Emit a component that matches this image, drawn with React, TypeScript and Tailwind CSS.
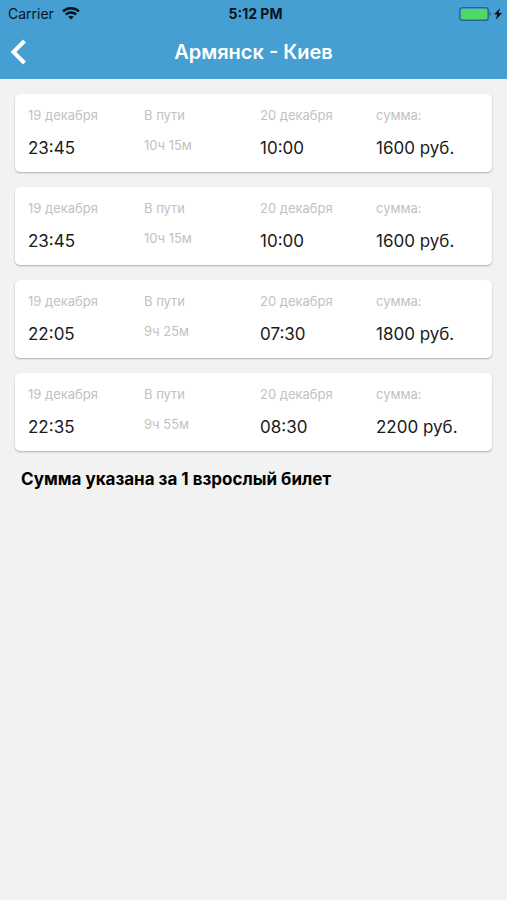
import React from 'react';

interface Trip {
  id: number;
  departDate: string;
  departTime: string;
  duration: string;
  arriveDate: string;
  arriveTime: string;
  price: string;
}

const TRIPS: Trip[] = [
  { id: 1, departDate: '19 декабря', departTime: '23:45', duration: '10ч 15м', arriveDate: '20 декабря', arriveTime: '10:00', price: '1600 руб.' },
  { id: 2, departDate: '19 декабря', departTime: '23:45', duration: '10ч 15м', arriveDate: '20 декабря', arriveTime: '10:00', price: '1600 руб.' },
  { id: 3, departDate: '19 декабря', departTime: '22:05', duration: '9ч 25м', arriveDate: '20 декабря', arriveTime: '07:30', price: '1800 руб.' },
  { id: 4, departDate: '19 декабря', departTime: '22:35', duration: '9ч 55м', arriveDate: '20 декабря', arriveTime: '08:30', price: '2200 руб.' },
];

const WifiIcon: React.FC = () => (
  <svg width="18" height="13" viewBox="0 0 18 13" fill="none" stroke="#06141d" strokeWidth="2.4" aria-hidden="true">
    <path d="M1 4.4C5.6 0.2 12.4 0.2 17 4.4" />
    <path d="M3.8 7.5C6.8 4.8 11.2 4.8 14.2 7.5" />
    <path d="M9 12.6L6.2 9.8C7.8 8.4 10.2 8.4 11.8 9.8Z" fill="#06141d" stroke="none" />
  </svg>
);

const BatteryIcon: React.FC = () => (
  <svg width="44" height="14" viewBox="0 0 44 14" aria-hidden="true">
    <rect x="0.7" y="0.7" width="28.6" height="12.6" rx="2.6" fill="none" stroke="#28658b" strokeWidth="1.2" />
    <rect x="2" y="2" width="26" height="10" rx="1.2" fill="#4cd964" />
    <path d="M30.6 4.8C32.2 5.4 32.2 8.6 30.6 9.2Z" fill="#28658b" />
    <path d="M41 1.2L35 7.6H38.2L36.8 12.8L43 6H39.6Z" fill="#06141d" />
  </svg>
);

const StatusBar: React.FC = () => (
  <div className="grid grid-cols-3 items-center h-[27px] pl-2 pr-1 text-sm text-[#06141d]">
    <div className="flex items-center gap-2">
      <span>Carrier</span>
      <WifiIcon />
    </div>
    <span className="text-center font-bold">5:12 PM</span>
    <div className="flex justify-end">
      <BatteryIcon />
    </div>
  </div>
);

const Header: React.FC = () => (
  <header className="bg-[#459fd3]">
    <StatusBar />
    <div className="grid grid-cols-[48px_1fr_48px] items-center h-[52px] pb-[2px]">
      <button type="button" aria-label="Назад" className="flex items-center h-full pl-[10px]">
        <svg width="18" height="26" viewBox="0 0 18 26" fill="none" stroke="#fff" strokeWidth="4" aria-hidden="true">
          <path d="M14.5 2L3.4 13L14.5 24" strokeLinejoin="miter" strokeLinecap="butt" />
        </svg>
      </button>
      <h1 className="text-center text-xl font-semibold text-white">Армянск - Киев</h1>
    </div>
  </header>
);

const TripCard: React.FC<{ trip: Trip }> = ({ trip }) => (
  <li className="grid grid-cols-4 pl-[13px] pt-[11px] pb-[14px] bg-white rounded-[5px] shadow-[0_1px_2px_rgba(0,0,0,0.28)]">
    <div>
      <p className="text-[13px] leading-5 text-[#c2c2c2]">{trip.departDate}</p>
      <p className="mt-[13px] text-[17px] leading-5 text-[#1a1a1a]">{trip.departTime}</p>
    </div>
    <div>
      <p className="text-[13px] leading-5 text-[#c2c2c2]">В пути</p>
      <p className="mt-[10px] text-[13px] leading-5 text-[#c2c2c2]">{trip.duration}</p>
    </div>
    <div>
      <p className="text-[13px] leading-5 text-[#c2c2c2]">{trip.arriveDate}</p>
      <p className="mt-[13px] text-[17px] leading-5 text-[#1a1a1a]">{trip.arriveTime}</p>
    </div>
    <div>
      <p className="text-[13px] leading-5 text-[#c2c2c2]">сумма:</p>
      <p className="mt-[13px] text-[17px] leading-5 text-[#1a1a1a]">{trip.price}</p>
    </div>
  </li>
);

export default function App() {
  return (
    <div className="min-h-screen bg-[#f2f2f2] font-[Inter,sans-serif]">
      <Header />
      <main className="px-[15px] pt-[15px]">
        <ul className="flex flex-col gap-[15px]">
          {TRIPS.map((trip) => (
            <TripCard key={trip.id} trip={trip} />
          ))}
        </ul>
        <p className="mt-4 pl-[6px] text-[17px] leading-6 font-bold text-black">Сумма указана за 1 взрослый билет</p>
      </main>
    </div>
  );
}
